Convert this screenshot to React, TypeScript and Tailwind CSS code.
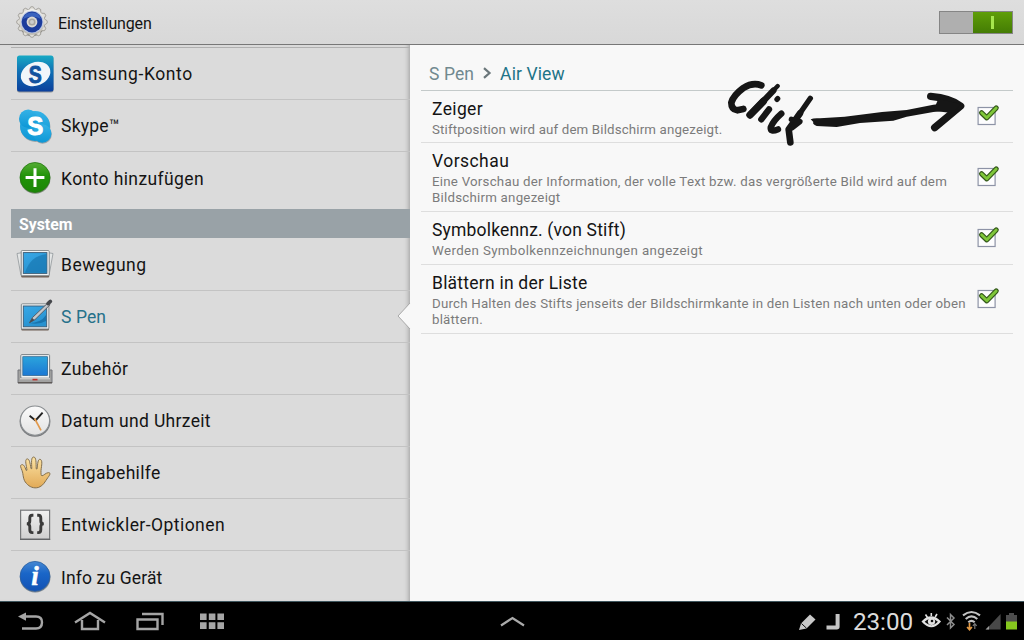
import React from "react";

// round gear shown next to the page title
const GearIcon = () => {
  const teeth = Array.from({ length: 12 }, (_, i) => i * 30);
  return (
    <svg width="34" height="34" viewBox="0 0 34 34">
      <defs>
        <linearGradient id="gear" x1="0" y1="0" x2="0" y2="1">
          <stop offset="0" stopColor="#f4f4f2" />
          <stop offset="1" stopColor="#b9b6ae" />
        </linearGradient>
      </defs>
      <circle cx="17" cy="18" r="13.2" fill="#8c8a84" />
      {teeth.map((a) => (
        <path
          key={a}
          d="M13.4 5.5 L15.8 1.8 H18.2 L20.6 5.5 Z"
          transform={`rotate(${a} 17 17)`}
          fill="#e0ded8"
          stroke="#908e88"
          strokeWidth="0.7"
        />
      ))}
      <circle cx="17" cy="17" r="12.8" fill="url(#gear)" />
      <circle cx="17" cy="17" r="11.2" fill="#b9c6e4" />
      <circle cx="17" cy="17" r="10.4" fill="#1c3c9c" />
      <path d="M8 14 A9.5 9.5 0 0 1 26 14 Q17 9 8 14" fill="#3a62be" />
      <circle cx="17" cy="17" r="5.4" fill="#dcd9d4" />
      <circle cx="17" cy="17" r="3.6" fill="#a9a6a0" />
      <circle cx="17" cy="17" r="2" fill="#ccc" />
    </svg>
  );
};

const SamsungIcon = () => (
  <svg width="40" height="40" viewBox="0 0 40 40">
    <defs>
      <linearGradient id="samsung" x1="0" y1="0" x2="0" y2="1">
        <stop offset="0" stopColor="#18a9c4" />
        <stop offset="0.45" stopColor="#0f6fb4" />
        <stop offset="1" stopColor="#0b3f9c" />
      </linearGradient>
    </defs>
    <rect x="2" y="2.5" width="36.5" height="36" rx="2.5" fill="#8f9499" />
    <rect x="2" y="1.5" width="36.5" height="36" rx="2.5" fill="url(#samsung)" />
    <ellipse cx="20.6" cy="20" rx="15.2" ry="11.6" transform="rotate(-22 20.6 20)" fill="#f0f5fa" />
    <text
      x="20.3"
      y="28.5"
      textAnchor="middle"
      fontFamily="Liberation Sans, sans-serif"
      fontWeight="bold"
      fontSize="24"
      textLength="13"
      lengthAdjust="spacingAndGlyphs"
      fill="#12529f"
      stroke="#12529f"
      strokeWidth="0.9"
    >
      S
    </text>
  </svg>
);

const SkypeIcon = () => (
  <svg width="40" height="40" viewBox="0 0 40 40">
    <defs>
      <linearGradient id="skype" x1="0" y1="0" x2="0" y2="1">
        <stop offset="0" stopColor="#35b2e6" />
        <stop offset="1" stopColor="#0d97d6" />
      </linearGradient>
    </defs>
    <g fill="#9aa3a8" transform="translate(0.4 1)">
      <circle cx="20" cy="20" r="15" />
      <circle cx="13.2" cy="12.7" r="9.2" />
      <circle cx="27.2" cy="27.5" r="9.2" />
    </g>
    <g fill="url(#skype)">
      <circle cx="20" cy="20" r="15" />
      <circle cx="13.2" cy="12.7" r="9.2" />
      <circle cx="27.2" cy="27.5" r="9.2" />
    </g>
    <text
      x="20.3"
      y="29"
      textAnchor="middle"
      fontFamily="Liberation Sans, sans-serif"
      fontWeight="bold"
      fontSize="25.5"
      textLength="16"
      lengthAdjust="spacingAndGlyphs"
      fill="#fff"
      stroke="#fff"
      strokeWidth="1"
    >
      S
    </text>
  </svg>
);

const AddIcon = () => (
  <svg width="40" height="40" viewBox="0 0 40 40">
    <defs>
      <linearGradient id="add" x1="0" y1="0" x2="0" y2="1">
        <stop offset="0" stopColor="#56ad35" />
        <stop offset="0.45" stopColor="#219308" />
        <stop offset="1" stopColor="#1b8606" />
      </linearGradient>
    </defs>
    <circle cx="20.2" cy="20.6" r="15.2" fill="#7d8a7a" />
    <circle cx="20" cy="19.5" r="15" fill="url(#add)" stroke="#23790f" strokeWidth="0.8" />
    <path d="M20 10.2V29M10.6 19.6H29.4" stroke="#fff" strokeWidth="3" />
  </svg>
);

const ScreenGradient = ({ id }: { id: string }) => (
  <defs>
    <linearGradient id={id} x1="0" y1="0" x2="0.4" y2="1">
      <stop offset="0" stopColor="#38a8e6" />
      <stop offset="1" stopColor="#2792d0" />
    </linearGradient>
  </defs>
);

const MotionIcon = () => (
  <svg width="40" height="40" viewBox="0 0 40 40">
    <ScreenGradient id="motion" />
    <path d="M2 8.5L8 7.5L9 31L6 30.5Z M38 8.5L32 7.5L31 31L34 30.5Z" fill="#e4e6e6" stroke="#90979a" strokeWidth="0.8" />
    <rect x="6.2" y="6" width="28" height="26.5" rx="1" fill="#6f5f55" />
    <rect x="6.2" y="5.5" width="28" height="25.2" rx="1" fill="#f1f3f3" stroke="#7d8488" strokeWidth="0.9" />
    <rect x="8.3" y="7.6" width="23.6" height="20.8" fill="url(#motion)" stroke="#3a5a74" strokeWidth="0.9" />
    <path d="M10 27.8Q15 11 31.5 9V27.8Z" fill="#1878b2" opacity="0.7" />
  </svg>
);

const PenIcon = () => (
  <svg width="40" height="40" viewBox="0 0 40 40">
    <ScreenGradient id="spen" />
    <rect x="6.3" y="7.5" width="27.6" height="26" rx="1" fill="#6f5f55" />
    <rect x="6.3" y="6.8" width="27.6" height="25.2" rx="1" fill="#f1f3f3" stroke="#7d8488" strokeWidth="0.9" />
    <rect x="8.3" y="9" width="23.4" height="20.8" fill="url(#spen)" stroke="#3a5a74" strokeWidth="0.9" />
    <path d="M14 26Q26 26 31 18V24Q24 28 14 26Z" fill="#0f5f94" opacity="0.6" />
    <path d="M14.6 25.6L17.6 20.4L33 5.8L35 7.8L20 22.6Z" fill="#c3c6ca" stroke="#52575d" strokeWidth="0.9" />
    <path d="M33 6.6L35.4 4.4" stroke="#45474b" strokeWidth="3.6" strokeLinecap="round" />
    <path d="M14 26.2L17.2 21L19.4 23Z" fill="#4a4d52" />
  </svg>
);

const DockIcon = () => (
  <svg width="40" height="40" viewBox="0 0 40 40">
    <defs>
      <linearGradient id="dock" x1="0" y1="0" x2="0" y2="1">
        <stop offset="0" stopColor="#2ba4dc" />
        <stop offset="1" stopColor="#1b78d4" />
      </linearGradient>
    </defs>
    <path d="M3 21H37V34H3Z" fill="#a2a2a1" stroke="#73757a" strokeWidth="1" />
    <rect x="5.8" y="5.6" width="28.8" height="23.6" rx="1" fill="#eff2f3" stroke="#7a8085" strokeWidth="1" />
    <rect x="7.8" y="7.7" width="24.8" height="18.8" fill="url(#dock)" stroke="#275f8a" strokeWidth="0.7" />
    <path d="M5 29.7H35" stroke="#c9c9c8" strokeWidth="1.4" />
    <rect x="17.5" y="29.8" width="5" height="1.6" fill="#c0302c" />
    <path d="M3 33.6H37" stroke="#5f5a57" strokeWidth="1.2" />
  </svg>
);

const ClockIcon = () => (
  <svg width="40" height="40" viewBox="0 0 40 40">
    <defs>
      <linearGradient id="clock" x1="0" y1="0" x2="0" y2="1">
        <stop offset="0" stopColor="#fbfbfb" />
        <stop offset="1" stopColor="#e2e2e2" />
      </linearGradient>
    </defs>
    <circle cx="20" cy="20.4" r="15.4" fill="#77797c" />
    <circle cx="20" cy="19.6" r="14.6" fill="url(#clock)" stroke="#8b8f92" strokeWidth="1.1" />
    <path d="M20.5 19.5L27.6 11.6M20.5 19.5L14.6 14.8" stroke="#222" strokeWidth="1.9" />
    <path d="M19.6 17.5L26 29.3" stroke="#e29a4e" strokeWidth="1.7" />
  </svg>
);

const HandIcon = () => (
  <svg width="40" height="40" viewBox="0 0 40 40">
    <defs>
      <linearGradient id="hand" x1="0" y1="0" x2="0" y2="1">
        <stop offset="0" stopColor="#fbe3a4" />
        <stop offset="1" stopColor="#e2aa57" />
      </linearGradient>
    </defs>
    <path
      d="M11.5 30.5C7.6 26.5 8.6 21.5 7 17.5C5.8 14.2 4.8 12.6 6.4 11.8C8.4 10.9 9.8 13.4 11.2 17.4L12 17.2C11.4 12.4 9.6 7 11.8 6C14.4 5.2 15 10 16 15.6L16.8 15.6C16.6 9.8 15.9 4.2 18.6 4C21.4 4 21 10 21.2 15.8L22 16C22.8 10.6 22.8 5.8 25.2 6.4C27.8 7 26.6 12.4 26 17.4C26 20.6 25.8 22.8 27 22.8C28.8 22.6 30.6 19.8 33.6 19.6C36.2 19.8 34.6 22.4 33 24.4C30 28.4 28.6 32.6 23.6 34.4C18.6 35.8 14.4 33.8 11.5 30.5Z"
      fill="url(#hand)"
      stroke="#84704d"
      strokeWidth="1"
    />
  </svg>
);

const BracesIcon = () => (
  <svg width="40" height="40" viewBox="0 0 40 40">
    <defs>
      <linearGradient id="braces" x1="0" y1="0" x2="0" y2="1">
        <stop offset="0" stopColor="#f1f1f1" />
        <stop offset="1" stopColor="#cfcfcf" />
      </linearGradient>
    </defs>
    <rect x="5.6" y="5.2" width="29" height="29" fill="url(#braces)" stroke="#77797b" strokeWidth="1.2" />
    <path d="M5 34.4H35.2" stroke="#626466" strokeWidth="1.2" />
    <g fill="none" stroke="#3a3a3a" strokeWidth="2.9">
      <path d="M18.4 10.2H17.2Q14.8 10.2 14.8 13V16Q14.8 18.9 11.8 18.9Q14.8 18.9 14.8 21.8V24.8Q14.8 27.6 17.2 27.6H18.4" />
      <path d="M22.2 10.2H23.4Q25.8 10.2 25.8 13V16Q25.8 18.9 28.8 18.9Q25.8 18.9 25.8 21.8V24.8Q25.8 27.6 23.4 27.6H22.2" />
    </g>
  </svg>
);

const InfoIcon = () => (
  <svg width="40" height="40" viewBox="0 0 40 40">
    <defs>
      <linearGradient id="info" x1="0" y1="0" x2="0" y2="1">
        <stop offset="0" stopColor="#4688d2" />
        <stop offset="0.4" stopColor="#1a66c8" />
        <stop offset="1" stopColor="#1251b4" />
      </linearGradient>
    </defs>
    <circle cx="20.2" cy="20.2" r="15.3" fill="#76828f" />
    <circle cx="20" cy="19.3" r="14.9" fill="url(#info)" stroke="#2a5fa2" strokeWidth="0.8" />
    <text
      x="20"
      y="27.8"
      textAnchor="middle"
      fontFamily="Liberation Serif, serif"
      fontWeight="bold"
      fontStyle="italic"
      fontSize="27"
      fill="#fff"
      stroke="#fff"
      strokeWidth="0.5"
    >
      i
    </text>
  </svg>
);

interface MenuEntry {
  label: string;
  icon: React.FC;
  tracking: string;
  active?: boolean;
}

const accounts: MenuEntry[] = [
  { label: "Samsung-Konto", icon: SamsungIcon, tracking: "tracking-[0.58px]" },
  { label: "Skype™", icon: SkypeIcon, tracking: "tracking-[0.25px]" },
  { label: "Konto hinzufügen", icon: AddIcon, tracking: "tracking-[0.4px]" },
];

const system: MenuEntry[] = [
  { label: "Bewegung", icon: MotionIcon, tracking: "tracking-[0.5px]" },
  { label: "S Pen", icon: PenIcon, tracking: "tracking-[0.1px]", active: true },
  { label: "Zubehör", icon: DockIcon, tracking: "tracking-[0.4px]" },
  { label: "Datum und Uhrzeit", icon: ClockIcon, tracking: "tracking-[0.33px]" },
  { label: "Eingabehilfe", icon: HandIcon, tracking: "tracking-[0.33px]" },
  { label: "Entwickler-Optionen", icon: BracesIcon, tracking: "tracking-[0.45px]" },
  { label: "Info zu Gerät", icon: InfoIcon, tracking: "tracking-[0.15px]" },
];

const options = [
  {
    title: "Zeiger",
    lines: ["Stiftposition wird auf dem Bildschirm angezeigt."],
    row: "h-[52px]",
    titleTracking: "tracking-[0.35px]",
    textTracking: "tracking-[0.15px]",
  },
  {
    title: "Vorschau",
    lines: [
      "Eine Vorschau der Information, der volle Text bzw. das vergrößerte Bild wird auf dem",
      "Bildschirm angezeigt",
    ],
    row: "h-[69px]",
    titleTracking: "tracking-[0.45px]",
    textTracking: "tracking-[0.23px]",
  },
  {
    title: "Symbolkennz. (von Stift)",
    lines: ["Werden Symbolkennzeichnungen angezeigt"],
    row: "h-[53px]",
    titleTracking: "tracking-[0.18px]",
    textTracking: "tracking-[0.38px]",
  },
  {
    title: "Blättern in der Liste",
    lines: [
      "Durch Halten des Stifts jenseits der Bildschirmkante in den Listen nach unten oder oben",
      "blättern.",
    ],
    row: "h-[69px]",
    titleTracking: "tracking-[0.23px]",
    textTracking: "tracking-[0.2px]",
  },
];

const MenuRow = ({ entry, last }: { entry: MenuEntry; last?: boolean }) => {
  const Icon = entry.icon;
  return (
    <li className={`flex h-[52px] items-center pl-1 ${last ? "" : "border-b border-[#c3c3c3]"}`}>
      <Icon />
      <span
        className={`ml-1.5 pt-px text-[17.5px] leading-6 ${entry.tracking} ${
          entry.active ? "text-[#26718a]" : "text-[#141414]"
        }`}
      >
        {entry.label}
      </span>
    </li>
  );
};

const Checkbox = () => (
  <svg width="26" height="24" viewBox="0 0 26 24">
    <rect x="3.1" y="3.5" width="17" height="17" fill="#fdfdfe" stroke="#8d93a6" strokeWidth="1.2" />
    <path d="M6.6 8.8L11.8 13.8L21.2 4" fill="none" stroke="#35591b" strokeWidth="5.2" strokeLinejoin="round" strokeLinecap="round" />
    <path d="M6.6 8.8L11.8 13.8L21.2 4" fill="none" stroke="#7fc73a" strokeWidth="2.8" strokeLinejoin="round" strokeLinecap="round" />
  </svg>
);

// handwritten note over the list, pointing at the first checkbox
const ClickNote = () => (
  <svg className="absolute left-[720px] top-[75px]" width="256" height="75" viewBox="0 225 768 225">
    <g fill="none" stroke="#161616" strokeLinecap="round" strokeLinejoin="round">
      <path d="M124 256Q98 246 70 264Q40 286 34 308Q34 328 52 331L70 327" strokeWidth="20" />
      <path d="M173 258L90 345" strokeWidth="13" />
      <path d="M160 272L90 345" strokeWidth="19" />
      <path d="M130 304L90 345" strokeWidth="22" />
      <path d="M173 296L171 298" strokeWidth="16" />
      <path d="M147 328L124 358" strokeWidth="19" />
      <path d="M184 341Q160 362 152 382Q150 398 174 388" strokeWidth="19" />
      <path d="M271 295L244 334L206 390" strokeWidth="16" />
      <path d="M240 340L206 388L211 427" strokeWidth="20" />
      <path d="M214 358L240 365L216 384" strokeWidth="16" />
      <path d="M632 289Q692 294 722 318L644 383" strokeWidth="22" />
    </g>
    <path
      d="M272 358Q282 353 300 355L374 350L486 336L560 330L640 314L722 306L724 328L640 336L560 350L520 362L420 369L350 381L290 378Q276 372 280 366Z"
      fill="#161616"
    />
    <path d="M655 296L722 312L700 340L640 332Z" fill="#161616" />
  </svg>
);

const Header = () => (
  <header className="flex h-[45px] shrink-0 items-center border-b border-[#777] bg-linear-to-b from-[#dedede] to-[#d8d8d8] pl-[15px] pr-[11px]">
    <GearIcon />
    <h1 className="ml-[9px] mt-[3px] text-[16px] leading-6 tracking-[-0.15px] text-[#141414]">Einstellungen</h1>
    <div className="ml-auto flex h-[23px] w-[74px] border border-[#858585] bg-[#afafaf]">
      <div className="ml-auto flex w-[39px] items-center justify-center bg-linear-to-b from-[#5f9e08] to-[#447c04]">
        <div className="h-[13px] w-[3px] bg-[#a6e64d]"></div>
      </div>
    </div>
  </header>
);

const Sidebar = () => (
  <aside className="flex w-[410px] shrink-0 flex-col bg-[#dbdbdb] pl-[11px] pt-[2px] shadow-[inset_-5px_0_5px_-4px_#9a9a9a]">
    <ul className="border-t border-[#b0b0b0]">
      {accounts.map((a, i) => (
        <MenuRow key={a.label} entry={a} last={i === accounts.length - 1} />
      ))}
    </ul>
    <h2 className="mt-[5px] flex h-[29px] shrink-0 items-center bg-[#99a2a7] pl-2 pt-0.5 text-[15.8px] font-bold text-white">
      System
    </h2>
    <ul className="mt-px">
      {system.map((s, i) => (
        <MenuRow key={s.label} entry={s} last={i === system.length - 1} />
      ))}
    </ul>
  </aside>
);

const Content = () => (
  <section className="relative flex-1 bg-[#f8f8f8] pl-[11px] pr-[11px]">
    <svg className="absolute -left-[13px] top-[256px]" width="14" height="30" viewBox="0 0 14 30">
      <path d="M14 1L1 15L14 29Z" fill="#f8f8f8" />
      <path d="M13 2L1 15L13 28" fill="none" stroke="#a9a9a9" strokeWidth="1" />
    </svg>
    <div className="flex h-[46px] items-center border-b border-[#c4caca] pl-2 pt-3 text-[17.5px] leading-6">
      <span className="tracking-[0.1px] text-[#71898f]">S Pen</span>
      <svg className="ml-2 mr-2" width="10" height="14" viewBox="0 0 10 14">
        <path d="M2 1.2L7.5 6L2 10.8" fill="none" stroke="#6b777b" strokeWidth="2.2" />
      </svg>
      <span className="tracking-[0.1px] text-[#1d7488]">Air View</span>
    </div>
    {options.map((o) => (
      <div key={o.title} className={`flex items-center border-b border-[#dedede] pl-[11px] ${o.row}`}>
        <div className="flex-1 pt-[2px]">
          <h3 className={`mb-px text-[17.5px] leading-[23px] text-[#141414] ${o.titleTracking}`}>{o.title}</h3>
          {o.lines.map((l) => (
            <p key={l} className={`whitespace-nowrap text-[13.3px] leading-4 text-[#7b7b7b] ${o.textTracking}`}>
              {l}
            </p>
          ))}
        </div>
        <div className="w-[38px] shrink-0 pb-px">
          <Checkbox />
        </div>
      </div>
    ))}
  </section>
);

const SystemBar = () => (
  <footer className="flex h-[39px] shrink-0 items-center border-t border-[#3f565e] bg-black">
    <svg width="240" height="38" viewBox="0 0 240 38">
      <g fill="none" stroke="#a5a5a5" strokeWidth="2.4">
        <path d="M24 14.5H36Q42 14.5 42 20.2Q42 26.5 36 26.5H22" />
        <path d="M75 20.5L90 11L105 20.5" />
        <path d="M82 18V27H98V18" />
        <path d="M137.5 17.5H157.5V27H137.5Z" />
        <path d="M142 12H162.5V23" />
      </g>
      <path d="M18 14.6L26 10.4V18.8Z" fill="#a5a5a5" />
      <g fill="#a5a5a5">
        <path d="M200 11.5h6.6v6.6h-6.6zM208.8 11.5h6.6v6.6h-6.6zM217.4 11.5h6.6v6.6h-6.6z" />
        <path d="M200 20.3h6.6v6.6h-6.6zM208.8 20.3h6.6v6.6h-6.6zM217.4 20.3h6.6v6.6h-6.6z" />
      </g>
    </svg>
    <svg className="ml-[260px]" width="26" height="38" viewBox="0 0 26 38">
      <path d="M1 23.5L12.5 16L24 23.5" fill="none" stroke="#aaa" strokeWidth="2.2" />
    </svg>
    <div className="ml-auto flex h-full items-center">
      <svg width="56" height="38" viewBox="0 0 56 38">
        <path d="M3 28L5 21.5L14 12.5L19.5 17.5L10.5 26.5Z" fill="#c9c9c9" />
        <path d="M5.4 21.5L10.5 26.2" stroke="#000" strokeWidth="0.9" />
        <path d="M41.6 12V25Q41.6 25.6 39 25.6H30.5" fill="none" stroke="#c4c4c4" strokeWidth="4" />
      </svg>
      <span className="w-[69px] whitespace-nowrap pl-px pt-0.5 text-[24.3px] leading-8 tracking-[-0.1px] text-[#dcdcdc]">
        23:00
      </span>
      <svg width="103" height="38" viewBox="0 0 103 38">
        {/* smart stay eye */}
        <path d="M2 19.5Q10 11.5 18.5 19.5Q10.5 29 2 19.5Z" fill="#111" stroke="#e2e2e2" strokeWidth="2.2" />
        <circle cx="10.5" cy="19.5" r="3.6" fill="#e2e2e2" />
        <circle cx="11" cy="19" r="1.3" fill="#111" />
        <path d="M4.5 12.5L6.5 15.5M10.3 11V14M16 12L14.2 15" stroke="#e2e2e2" strokeWidth="1.6" />
        {/* bluetooth */}
        <path d="M26 15.5L33 22.5L29.5 26V12.5L33 16L26 23" fill="none" stroke="#8d8d8d" strokeWidth="1.5" />
        {/* wifi with traffic arrows */}
        <g fill="none" stroke="#c2c2c2" strokeWidth="2.1">
          <path d="M42 13.4Q50.5 6.6 59 13.4" />
          <path d="M44.7 17Q50.5 11.8 56.3 17" />
          <path d="M47.3 20.3Q50.5 17.4 53.7 20.3" />
        </g>
        <path d="M48.5 21V27M46.1 25L48.5 27.8L50.9 25" fill="none" stroke="#e39a45" strokeWidth="1.7" />
        <path d="M53.8 27V22M51.9 23.8L53.8 21.6L55.7 23.8" fill="none" stroke="#777" strokeWidth="1.2" />
        {/* signal */}
        <path d="M65 27.5L79.6 12V27.5Z" fill="#484848" />
        <path d="M64.5 27.5L68 24V27.5Z" fill="#999" />
        {/* battery */}
        <path d="M85 13h3v-2h5v2h3v7h-11z" fill="#4d4d4d" />
        <rect x="85" y="19.5" width="11" height="8" fill="#86c81e" />
      </svg>
    </div>
  </footer>
);

const App: React.FC = () => {
  return (
    <div className="relative flex h-[640px] w-[1024px] flex-col overflow-hidden bg-[#dbdbdb] font-['Roboto',sans-serif]">
      <Header />
      <main className="flex h-[556px] shrink-0 overflow-hidden">
        <Sidebar />
        <Content />
      </main>
      <SystemBar />
      <ClickNote />
    </div>
  );
};

export default App;
